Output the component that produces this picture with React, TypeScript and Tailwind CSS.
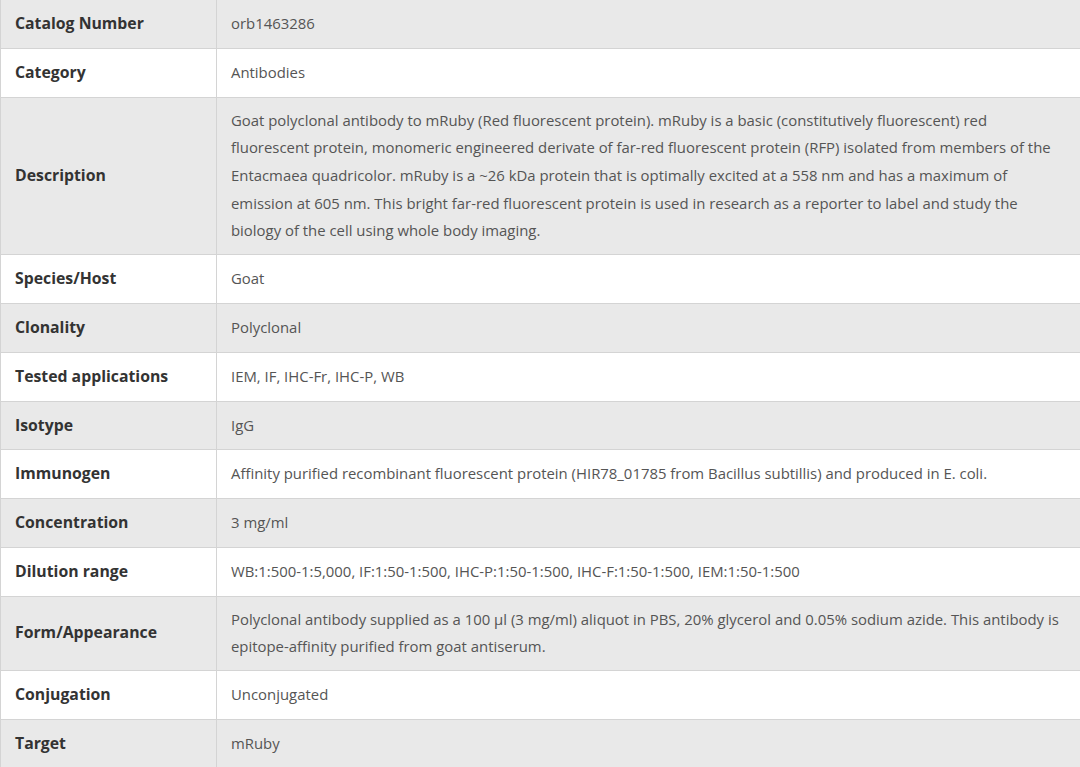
const rows: [string, string][] = [
  ["Catalog Number", "orb1463286"],
  ["Category", "Antibodies"],
  [
    "Description",
    "Goat polyclonal antibody to mRuby (Red fluorescent protein). mRuby is a basic (constitutively fluorescent) red fluorescent protein, monomeric engineered derivate of far-red fluorescent protein (RFP) isolated from members of the Entacmaea quadricolor. mRuby is a ~26 kDa protein that is optimally excited at a 558 nm and has a maximum of emission at 605 nm. This bright far-red fluorescent protein is used in research as a reporter to label and study the biology of the cell using whole body imaging.",
  ],
  ["Species/Host", "Goat"],
  ["Clonality", "Polyclonal"],
  ["Tested applications", "IEM, IF, IHC-Fr, IHC-P, WB"],
  ["Isotype", "IgG"],
  [
    "Immunogen",
    "Affinity purified recombinant fluorescent protein (HIR78_01785 from Bacillus subtillis) and produced in E. coli.",
  ],
  ["Concentration", "3 mg/ml"],
  [
    "Dilution range",
    "WB:1:500-1:5,000, IF:1:50-1:500, IHC-P:1:50-1:500, IHC-F:1:50-1:500, IEM:1:50-1:500",
  ],
  [
    "Form/Appearance",
    "Polyclonal antibody supplied as a 100 µl (3 mg/ml) aliquot in PBS, 20% glycerol and 0.05% sodium azide. This antibody is epitope-affinity purified from goat antiserum.",
  ],
  ["Conjugation", "Unconjugated"],
  ["Target", "mRuby"],
];

export default function App() {
  return (
    <div className="h-[767px] w-[1080px] overflow-hidden bg-white font-['Open_Sans',sans-serif]">
      <div className="border-l border-[#d4d4d4]">
        {rows.map(([label, value], i) => (
          <div
            key={label}
            className={`flex border-b border-[#d4d4d4] ${i % 2 === 0 ? "bg-[#e9e9e9]" : "bg-white"}`}
          >
            {/* label cell */}
            <div className="flex w-[216px] shrink-0 items-center border-r border-[#d4d4d4] py-[9px] pr-[14px] pl-[14px] text-[15.8px] leading-[29.8px] font-bold text-[#333]">
              {label}
            </div>
            {/* value cell */}
            <div className="flex flex-1 items-center py-[9px] pr-[17px] pl-[14px] text-[14.9px] leading-[27.7px] text-[#555]">
              <p>{value}</p>
            </div>
          </div>
        ))}
      </div>
    </div>
  );
}
